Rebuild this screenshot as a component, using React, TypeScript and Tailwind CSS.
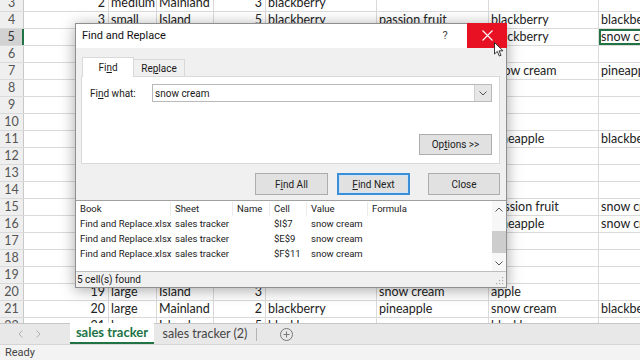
import React from "react";

const COLS = [85, 48, 57, 52, 111, 112, 110, 60];
const NUMERIC = [true, false, false, true, false, false, false, false];

const DATA: Record<number, string[]> = {
  3: ["2", "medium", "Mainland", "3", "blackberry", "", "", ""],
  4: ["3", "small", "Island", "5", "blackberry", "passion fruit", "blackberry", "blackberry"],
  5: ["4", "large", "Island", "2", "apple", "pineapple", "blackberry", "snow cream"],
  6: ["5", "medium", "Mainland", "4", "", "", "", ""],
  7: ["6", "small", "Island", "3", "apple", "", "snow cream", "pineapple"],
  8: ["7", "large", "Mainland", "1", "", "", "", ""],
  9: ["8", "medium", "Island", "5", "", "", "", ""],
  10: ["9", "small", "Mainland", "2", "", "", "", ""],
  11: ["10", "large", "Island", "4", "", "", "pineapple", "blackberry"],
  12: ["11", "medium", "Mainland", "3", "", "", "", ""],
  13: ["12", "small", "Island", "2", "", "", "", ""],
  14: ["13", "large", "Mainland", "5", "", "", "", ""],
  15: ["14", "medium", "Island", "1", "", "", "passion fruit", "snow cream"],
  16: ["15", "small", "Mainland", "4", "", "", "pineapple", "snow cream"],
  17: ["16", "large", "Island", "3", "", "", "", ""],
  18: ["17", "medium", "Mainland", "2", "", "", "", ""],
  19: ["18", "small", "Island", "5", "", "", "", ""],
  20: ["19", "large", "Island", "3", "", "snow cream", "apple", ""],
  21: ["20", "large", "Mainland", "2", "blackberry", "pineapple", "snow cream", "blackberry"],
  22: ["21", "large", "Island", "5", "blackberry", "snow cream", "blackberry", ""],
};

function GridRow({ n }: { n: number }) {
  const cells = DATA[n] || [];
  const sel = n === 5;
  return (
    <div className="flex h-[17px] border-b border-[#dadada]">
      <div
        className={
          "w-[24px] shrink-0 flex items-center justify-center text-[12.5px] font-['Lato',sans-serif] " +
          (sel
            ? "bg-[#d2d2d2] text-[#333] border-r-2 border-[#217346]"
            : "bg-[#efefef] text-[#555] border-r border-[#c8c8c8]")
        }
      >
        {n}
      </div>
      {COLS.map((w, i) => (
        <div
          key={i}
          style={{ width: w }}
          className={
            "shrink-0 h-full border-r border-[#dadada] flex items-center whitespace-nowrap overflow-hidden text-[12.5px] text-[#222] font-['Lato',sans-serif] " +
            (NUMERIC[i] ? "justify-end pr-[3px] " : "justify-start pl-[2px] ") +
            (sel && i === 7 ? "shadow-[inset_0_0_0_2px_#217346]" : "")
          }
        >
          {cells[i]}
        </div>
      ))}
    </div>
  );
}

function Btn({ children, primary, w, mr }: { children: React.ReactNode; primary?: boolean; w: number; mr: number }) {
  return (
    <div
      style={{ width: w, marginRight: mr }}
      className={
        "h-[22px] flex items-center justify-center bg-[#e1e1e1] text-[10px] text-[#222] " +
        (primary ? "border-2 border-[#3c8fd6] shadow-[inset_0_0_0_1px_#cfe3f5]" : "border border-[#adadad]")
      }
    >
      {children}
    </div>
  );
}

function Dialog() {
  const rows = [
    ["Find and Replace.xlsx", "sales tracker", "", "$I$7", "snow cream", ""],
    ["Find and Replace.xlsx", "sales tracker", "", "$E$9", "snow cream", ""],
    ["Find and Replace.xlsx", "sales tracker", "", "$F$11", "snow cream", ""],
  ];
  const lw = [95, 62, 37, 37, 61, 124];
  const heads = ["Book", "Sheet", "Name", "Cell", "Value", "Formula"];
  return (
    <div className="absolute left-[75px] top-[23px] w-[432px] h-[265px] border border-[#8f8f8f] bg-[#f0f0f0] shadow-[0_2px_14px_rgba(0,0,0,0.35)] flex flex-col font-['Roboto',sans-serif] text-[#1a1a1a]">
      {/* title bar */}
      <div className="h-[24px] shrink-0 bg-white flex items-stretch">
        <div className="flex-1 flex items-center pl-[6px] text-[11px] text-[#111]">Find and Replace</div>
        <div className="w-[16px] flex items-center justify-center text-[11px] text-[#444] mr-[14px]">?</div>
        <div className="w-[40px] -mt-[1px] -mr-[1px] h-[25px] bg-[#e81123] flex items-center justify-center">
          <svg width="11" height="11" viewBox="0 0 11 11">
            <path d="M0.5 0.5 L10.5 10.5 M10.5 0.5 L0.5 10.5" stroke="white" strokeWidth="1.1" />
          </svg>
        </div>
      </div>
      {/* body */}
      <div className="pl-[5px] pr-[6px] pt-[8px] shrink-0">
        <div className="flex items-end pl-[1px] h-[20px]">
          <div className="w-[52px] h-[20px] bg-white border border-b-0 border-[#d9d9d9] flex items-center justify-center text-[10px] relative z-10 -mb-[1px]">
            Fi<span className="underline">n</span>d
          </div>
          <div className="w-[51px] h-[17px] bg-[#f0f0f0] border border-b-0 border-l-0 border-[#d9d9d9] flex items-center justify-center text-[10px]">
            Re<span className="underline">p</span>lace
          </div>
        </div>
        <div className="h-[88px] bg-white border border-[#d9d9d9] flex flex-col justify-between pt-[7px] pb-[8px] pl-[8px] pr-[7px]">
          <div className="flex items-center">
            <div className="w-[62px] text-[10px]">
              Fi<span className="underline">n</span>d what:
            </div>
            <div className="flex-1 h-[18px] border border-[#b9b9b9] flex items-center">
              <div className="flex-1 pl-[2px] text-[10px]">snow cream</div>
              <div className="w-[17px] h-full bg-[#e6e6e6] border-l border-[#d0d0d0] flex items-center justify-center">
                <svg width="8" height="5" viewBox="0 0 8 5">
                  <path d="M0.5 0.5 L4 4 L7.5 0.5" stroke="#555" strokeWidth="1" fill="none" />
                </svg>
              </div>
            </div>
          </div>
          <div className="flex justify-end">
            <div className="w-[73px] h-[21px] bg-[#e1e1e1] border border-[#adadad] flex items-center justify-center text-[10px]">
              Op<span className="underline">t</span>ions &gt;&gt;
            </div>
          </div>
        </div>
        <div className="flex justify-end mt-[9px]">
          <Btn w={73} mr={9}>
            F<span className="underline">i</span>nd All
          </Btn>
          <Btn w={73} mr={18} primary>
            <span className="underline">F</span>ind Next
          </Btn>
          <Btn w={72} mr={0}>Close</Btn>
        </div>
      </div>
      {/* list */}
      <div className="mt-[5px] h-[71px] shrink-0 bg-white border-t border-[#a0a0a0] flex">
        <div className="flex-1 text-[9.5px]">
          <div className="flex h-[16px] items-center">
            {heads.map((h, i) => (
              <div
                key={i}
                style={{ width: lw[i] }}
                className={"pl-[4px] " + (i < 5 ? "border-r border-[#ececec]" : "")}
              >
                {h}
              </div>
            ))}
          </div>
          {rows.map((r, ri) => (
            <div key={ri} className="flex h-[15px] items-center">
              {r.map((c, i) => (
                <div key={i} style={{ width: lw[i] }} className="pl-[4px] whitespace-nowrap">
                  {c}
                </div>
              ))}
            </div>
          ))}
        </div>
        <div className="w-[14px] bg-[#f7f7f7] flex flex-col items-center">
          <div className="h-[16px] flex items-center justify-center">
            <svg width="8" height="5" viewBox="0 0 8 5">
              <path d="M0.5 4.5 L4 1 L7.5 4.5" stroke="#555" strokeWidth="1" fill="none" />
            </svg>
          </div>
          <div className="flex-1 w-full flex flex-col justify-end">
            <div className="h-[22px] w-full bg-[#cdcdcd] mb-[2px]" />
          </div>
          <div className="h-[16px] flex items-center justify-center">
            <svg width="8" height="5" viewBox="0 0 8 5">
              <path d="M0.5 0.5 L4 4 L7.5 0.5" stroke="#555" strokeWidth="1" fill="none" />
            </svg>
          </div>
        </div>
      </div>
      {/* status */}
      <div className="flex-1 border-t border-[#bdbdbd] flex items-center pl-[1px] text-[10px] relative">
        5 cell(s) found
        <svg className="absolute right-[2px] bottom-[2px]" width="8" height="8" viewBox="0 0 8 8">
          <rect x="6" y="0" width="1.2" height="1.2" fill="#aaa" />
          <rect x="3" y="3" width="1.2" height="1.2" fill="#aaa" />
          <rect x="6" y="3" width="1.2" height="1.2" fill="#aaa" />
          <rect x="0" y="6" width="1.2" height="1.2" fill="#aaa" />
          <rect x="3" y="6" width="1.2" height="1.2" fill="#aaa" />
          <rect x="6" y="6" width="1.2" height="1.2" fill="#aaa" />
        </svg>
      </div>
    </div>
  );
}

export default function App() {
  const nums: number[] = [];
  for (let i = 3; i <= 22; i++) nums.push(i);
  return (
    <div className="relative w-[640px] h-[360px] overflow-hidden bg-white flex flex-col">
      <div className="h-[323px] shrink-0 overflow-hidden">
        <div className="-mt-[5px]">
          {nums.map((n) => (
            <GridRow key={n} n={n} />
          ))}
        </div>
      </div>
      {/* sheet tabs */}
      <div className="h-[21px] shrink-0 bg-[#e8e8e8] border-t border-[#c6c6c6] flex items-stretch font-['Lato',sans-serif]">
        <div className="w-[70px] flex items-center pl-[18px] gap-[13px]">
          <svg width="5" height="8" viewBox="0 0 5 8">
            <path d="M4.5 0.5 L1 4 L4.5 7.5" stroke="#b0b0b0" strokeWidth="1" fill="none" />
          </svg>
          <svg width="5" height="8" viewBox="0 0 5 8">
            <path d="M0.5 0.5 L4 4 L0.5 7.5" stroke="#b0b0b0" strokeWidth="1" fill="none" />
          </svg>
        </div>
        <div className="w-[84px] -mt-[1px] bg-white border-b-2 border-[#217346] flex items-center justify-center text-[13px] font-bold text-[#217346]">
          sales tracker
        </div>
        <div className="w-[102px] flex items-center justify-center text-[12.5px] text-[#444]">
          sales tracker (2)
        </div>
        <div className="flex items-center">
          <div className="w-px h-[13px] bg-[#b5b5b5]" />
        </div>
        <div className="w-[58px] flex items-center justify-center">
          <svg width="13" height="13" viewBox="0 0 13 13">
            <circle cx="6.5" cy="6.5" r="6" stroke="#777" strokeWidth="1" fill="none" />
            <path d="M6.5 3.5 V9.5 M3.5 6.5 H9.5" stroke="#777" strokeWidth="1" />
          </svg>
        </div>
      </div>
      {/* status bar */}
      <div className="flex-1 bg-[#f3f3f3] border-t border-[#d6d6d6] flex items-center pl-[5px] text-[11px] text-[#444] font-['Roboto',sans-serif]">
        Ready
      </div>
      <Dialog />
      {/* mouse cursor */}
      <svg className="absolute left-[494px] top-[42px]" width="10" height="15" viewBox="0 0 10 15">
        <path d="M0.5 0.5 L0.5 12 L3.3 9.4 L5.3 14 L7 13.3 L5.1 8.8 L9 8.8 Z" fill="white" stroke="#222" strokeWidth="0.9" />
      </svg>
    </div>
  );
}
